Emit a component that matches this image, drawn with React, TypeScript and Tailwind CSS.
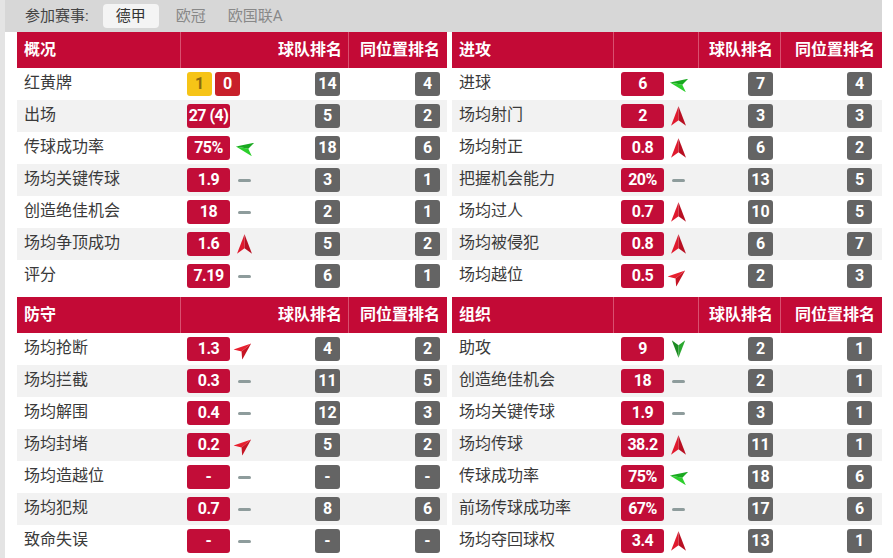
import React from "react";

type Trend = "up" | "dash" | "gleft" | "ne" | "down" | "none";
type Row = [string, string, Trend, string, string];

const FONT = { fontFamily: 'Roboto, "Noto Sans CJK SC", sans-serif' };

const overview: Row[] = [
  ["红黄牌", "cards", "none", "14", "4"],
  ["出场", "27 (4)", "none", "5", "2"],
  ["传球成功率", "75%", "gleft", "18", "6"],
  ["场均关键传球", "1.9", "dash", "3", "1"],
  ["创造绝佳机会", "18", "dash", "2", "1"],
  ["场均争顶成功", "1.6", "up", "5", "2"],
  ["评分", "7.19", "dash", "6", "1"],
];

const attack: Row[] = [
  ["进球", "6", "gleft", "7", "4"],
  ["场均射门", "2", "up", "3", "3"],
  ["场均射正", "0.8", "up", "6", "2"],
  ["把握机会能力", "20%", "dash", "13", "5"],
  ["场均过人", "0.7", "up", "10", "5"],
  ["场均被侵犯", "0.8", "up", "6", "7"],
  ["场均越位", "0.5", "ne", "2", "3"],
];

const defence: Row[] = [
  ["场均抢断", "1.3", "ne", "4", "2"],
  ["场均拦截", "0.3", "dash", "11", "5"],
  ["场均解围", "0.4", "dash", "12", "3"],
  ["场均封堵", "0.2", "ne", "5", "2"],
  ["场均造越位", "-", "dash", "-", "-"],
  ["场均犯规", "0.7", "dash", "8", "6"],
  ["致命失误", "-", "dash", "-", "-"],
];

const organise: Row[] = [
  ["助攻", "9", "down", "2", "1"],
  ["创造绝佳机会", "18", "dash", "2", "1"],
  ["场均关键传球", "1.9", "dash", "3", "1"],
  ["场均传球", "38.2", "up", "11", "1"],
  ["传球成功率", "75%", "gleft", "18", "6"],
  ["前场传球成功率", "67%", "dash", "17", "6"],
  ["场均夺回球权", "3.4", "up", "13", "1"],
];

// navigation-style arrowhead, pointing up before rotation
const Arrow = ({ light, dark, rot }: { light: string; dark: string; rot: string }) => (
  <svg width="15" height="20" viewBox="0 0 14 18" className={rot}>
    <path d="M7 0 L0 18 L7 13 Z" fill={light} />
    <path d="M7 0 L14 18 L7 13 Z" fill={dark} />
  </svg>
);

const TrendIcon = ({ t }: { t: Trend }) => {
  if (t === "dash") return <span className="block w-[13px] h-[3px] rounded-sm bg-[#8e9c9c] ml-[1px]" />;
  if (t === "up") return <Arrow light="#e01a2e" dark="#b80f22" rot="" />;
  if (t === "ne") return <Arrow light="#e8202f" dark="#c51424" rot="rotate-[50deg] scale-90" />;
  if (t === "gleft") return <Arrow light="#2ccf2c" dark="#18a81f" rot="-rotate-[80deg] scale-90" />;
  if (t === "down") return <Arrow light="#2aa82f" dark="#1c8a22" rot="rotate-180 scale-90" />;
  return null;
};

const badge = "h-6 rounded-[3px] text-white font-bold text-[16px] flex items-center justify-center";

const Table = ({ title, rows, right }: { title: string; rows: Row[]; right?: boolean }) => {
  const cols = right ? "grid-cols-[162px_85px_82px_101px]" : "grid-cols-[164px_84px_84px_98px]";
  return (
    <div className="w-[430px]">
      <div className={`grid ${cols} h-[36px] bg-[#c30a36] text-white font-bold text-[16px] items-stretch`}>
        <div className="flex items-center pl-[7px] border-r border-[#d9506f]">{title}</div>
        {right ? (
          <>
            <div className="border-r border-[#d9506f]" />
            <div className="flex items-center justify-end pr-[7px] border-r border-[#d9506f]">球队排名</div>
          </>
        ) : (
          <div className="col-span-2 flex items-center justify-end pr-[6px] border-r border-[#d9506f]">球队排名</div>
        )}
        <div className="flex items-center justify-end pr-[7px]">同位置排名</div>
      </div>
      {rows.map((r, i) => (
        <div key={i} className={`grid ${cols} h-8 items-center ${i % 2 === 1 ? "bg-[#f2f2f2]" : "bg-white"}`}>
          <div className="pl-[7px] text-[16px] text-[#3a3a3a] -mt-[2px]">{r[0]}</div>
          <div className={`flex items-center gap-[7px] ${right ? "pl-[7px]" : "pl-[6px]"}`}>
            {r[1] === "cards" ? (
              <div className="flex gap-[3px]">
                <span className={`${badge} w-[25px] bg-[#f6c417] !text-[#8a6a10]`}>1</span>
                <span className={`${badge} w-[25px] bg-[#c8202a]`}>0</span>
              </div>
            ) : (
              <span className={`${badge} w-[43px] bg-[#c20d38] tracking-[-0.5px] whitespace-nowrap`}>{r[1]}</span>
            )}
            <TrendIcon t={r[2]} />
          </div>
          <div className={`flex justify-end ${right ? "pr-[8px]" : "pr-[9px]"}`}>
            <span className={`${badge} w-[25px] bg-[#646464]`}>{r[3]}</span>
          </div>
          <div className={`flex justify-end ${right ? "pr-[10px]" : "pr-[7px]"}`}>
            <span className={`${badge} w-[25px] bg-[#646464]`}>{r[4]}</span>
          </div>
        </div>
      ))}
    </div>
  );
};

export default function App() {
  return (
    <div className="w-[893px] h-[558px] overflow-hidden bg-white flex" style={FONT}>
      <div className="w-[5px] h-full bg-[#e4e4e4]" />
      <div className="w-[877px] flex flex-col">
        <div className="h-8 bg-[#d7d7d7] flex items-center pl-[20px] text-[15px]">
          <span className="text-[#444]">参加赛事:</span>
          <span className="ml-[14px] w-[56px] h-6 rounded bg-[#f4f4f4] text-[#333] flex items-center justify-center">德甲</span>
          <span className="ml-[17px] text-[#888]">欧冠</span>
          <span className="ml-[22px] text-[#888]">欧国联A</span>
        </div>
        <div className="pl-[12px] flex gap-[5px]">
          <div className="flex flex-col gap-[5px]">
            <Table title="概况" rows={overview} />
            <Table title="防守" rows={defence} />
          </div>
          <div className="flex flex-col gap-[5px]">
            <Table title="进攻" rows={attack} right />
            <Table title="组织" rows={organise} right />
          </div>
        </div>
      </div>
    </div>
  );
}
